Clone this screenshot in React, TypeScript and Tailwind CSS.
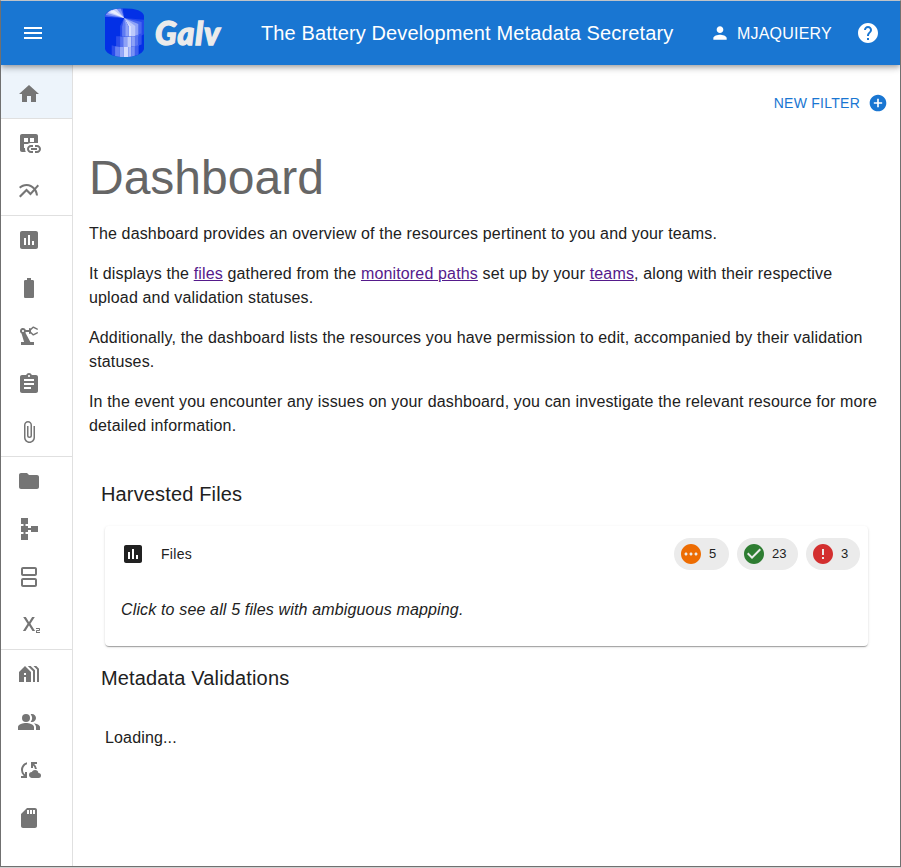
import type { ReactNode } from "react";
import type { IconType } from "react-icons";
import {
  MdAddCircle,
  MdAssessment,
  MdAssignment,
  MdAttachFile,
  MdBatteryFull,
  MdCheckCircle,
  MdCloudSync,
  MdDatasetLinked,
  MdError,
  MdFolder,
  MdHelp,
  MdHolidayVillage,
  MdHome,
  MdMenu,
  MdMultilineChart,
  MdOutlineSplitscreen,
  MdPending,
  MdPeopleAlt,
  MdPerson,
  MdPrecisionManufacturing,
  MdSchema,
  MdSdCard,
  MdSubscript,
} from "react-icons/md";

const groups: IconType[][] = [
  [MdDatasetLinked, MdMultilineChart],
  [MdAssessment, MdBatteryFull, MdPrecisionManufacturing, MdAssignment, MdAttachFile],
  [MdFolder, MdSchema, MdOutlineSplitscreen, MdSubscript],
  [MdHolidayVillage, MdPeopleAlt, MdCloudSync, MdSdCard],
];

function Logo() {
  return (
    <svg viewBox="30 26 116 146" className="mb-[2px] h-[49px] w-[39px]" preserveAspectRatio="none">
      <defs>
        <clipPath id="drum">
          <path d="M30 50C32 36 55 27 88 27s56 9 58 23v98c-4 15-28 24-58 24s-54-9-58-24z" />
        </clipPath>
      </defs>
      <g clipPath="url(#drum)">
        <path fill="#0330e6" d="M30 26h116v146H30z" />
        <path fill="#3d5df0" d="M87 56L30 52V44l14-12 20-6h18z" />
        <path fill="#7d93f5" d="M87 56L32 47l10-13 14-4 20-4z" />
        <path fill="#c3cdfb" d="M87 56L38 41l10-9 16-4z" />
        <path fill="#e9edff" d="M87 56L44 38l12-6z" />
        <path fill="#2347eb" d="M87 56l59 5v43l-10 6-49-4z" />
        <path fill="#2a4cec" d="M87 56L75 80v30h12z" />
        <path fill="#4868ef" d="M87 56l52 12v38l-10 5z" />
        <path fill="#5f7bf2" d="M87 56l-6 26v29h12V80z" />
        <path fill="#8fa3f7" d="M87 56l42 18v34l-18 4V80z" />
        <path fill="#bdc9fb" d="M87 56l33 24v30h-12V82z" />
        <path fill="#d8e0ff" d="M87 56l22 26v29h-8V82z" />
        <path fill="#8fa3f7" d="M87 56l14 26v29H91V76z" />
        <path fill="#2b4deb" d="M63 110h14v32H63z" />
        <path fill="#5470f0" d="M75 111h12v31H75z" />
        <path fill="#8da1f6" d="M85 112h11v30H85z" />
        <path fill="#c0ccfb" d="M96 112h12v30H96z" />
        <path fill="#8ea2f6" d="M108 111h12v30h-12z" />
        <path fill="#5b77f1" d="M119 109l11-4v34l-11 3z" />
        <path fill="#3153ec" d="M130 105l9-4v34l-9 3z" />
        <path fill="#2b4deb" d="M50 137l10 3v32H50z" />
        <path fill="#6580f2" d="M60 140l14 2v30H60z" />
        <path fill="#95a8f7" d="M74 142h12v30H74z" />
        <path fill="#d4dcff" d="M86 142h13v30H86z" />
        <path fill="#aab9f9" d="M99 142h10v30H99z" />
        <path fill="#7890f4" d="M109 141l10-1v32h-10z" />
        <path fill="#3f60ee" d="M119 140l11-4v36h-11z" />
      </g>
    </svg>
  );
}

function NavItem({ icon: Icon }: { icon: IconType }) {
  return (
    <li className="flex h-12 items-center pl-4">
      <Icon className="size-6" />
    </li>
  );
}

interface ChipProps {
  icon: IconType;
  color: string;
  width: string;
  children: ReactNode;
}

function Chip({ icon: Icon, color, width, children }: ChipProps) {
  return (
    <span className={`flex h-8 items-center gap-[6px] rounded-full bg-[#ebebeb] pl-[5px] text-[13px] ${width}`}>
      <Icon className={`size-6 ${color}`} />
      {children}
    </span>
  );
}

function DocLink({ children }: { children: ReactNode }) {
  return (
    <a href="#" className="text-[#551a8b] underline">
      {children}
    </a>
  );
}

export default function App() {
  return (
    <div className="h-[868px] w-[901px] bg-[#d0d0d0] pb-px font-['Liberation_Sans',Arial,sans-serif] text-[#212121]">
      <div className="flex h-full flex-col overflow-hidden border border-[#707070] border-t-[#bfc3c8] bg-white">
        <header className="z-10 flex h-16 shrink-0 items-center bg-[#1976d2] pl-5 text-white shadow-[0_2px_4px_-1px_rgba(0,0,0,0.2),0_4px_5px_0_rgba(0,0,0,0.14),0_1px_10px_0_rgba(0,0,0,0.12)]">
          <MdMenu className="size-6" />
          <div className="ml-[60px] flex items-center">
            <Logo />
            <span className="ml-[11px] w-[69px] font-['Lato',sans-serif] text-[32px] leading-none font-black tracking-[1px] text-[#ebebeb] italic [-webkit-text-stroke:1.3px_#ebebeb]">
              Galv
            </span>
          </div>
          <h1 className="ml-[37px] w-[449px] text-[20px] leading-8 tracking-[0.13px] whitespace-nowrap">
            The Battery Development Metadata Secretary
          </h1>
          <div className="flex items-center gap-[7px] text-base">
            <MdPerson className="size-5" />
            <span className="mt-px w-[96px] tracking-[0.2px]">MJAQUIERY</span>
          </div>
          <MdHelp className="ml-[23px] size-6" />
        </header>

        <div className="flex min-h-0 flex-1">
          <nav className="w-[72px] shrink-0 border-r border-[#e0e0e0] text-[#757575]">
            <div className="flex h-[53px] items-center bg-[#edf4fb] pt-[5px] pl-4">
              <MdHome className="size-6" />
            </div>
            {groups.map((icons, i) => (
              <ul key={i} className="border-t border-[#e0e0e0]">
                {icons.map((icon, j) => (
                  <NavItem key={j} icon={icon} />
                ))}
              </ul>
            ))}
          </nav>

          <main className="min-w-0 flex-1 px-4">
            <div className="mt-[26px] -mr-1 flex h-6 items-center justify-end gap-2 text-[14px] tracking-[0.25px] text-[#1976d2]">
              NEW FILTER
              <MdAddCircle className="size-5" />
            </div>

            <h2 className="mt-[35px] text-[48px] leading-14 text-[#666666]">Dashboard</h2>
            <div className="mt-4 space-y-4 text-base leading-6 tracking-[0.15px]">
              <p>The dashboard provides an overview of the resources pertinent to you and your teams.</p>
              <p>
                It displays the <DocLink>files</DocLink> gathered from the <DocLink>monitored paths</DocLink> set up by
                your <DocLink>teams</DocLink>, along with their respective
                <br />
                upload and validation statuses.
              </p>
              <p>
                Additionally, the dashboard lists the resources you have permission to edit, accompanied by their
                validation statuses.
              </p>
              <p>
                In the event you encounter any issues on your dashboard, you can investigate the relevant resource for
                more detailed information.
              </p>
            </div>

            <h3 className="mt-10 ml-3 text-[20px] leading-8 tracking-[0.15px]">Harvested Files</h3>
            <section className="mt-4 mr-4 ml-4 h-[120px] rounded-[4px] bg-white shadow-[0_2px_1px_-1px_rgba(0,0,0,0.2),0_1px_1px_0_rgba(0,0,0,0.14),0_1px_3px_0_rgba(0,0,0,0.12)]">
              <div className="flex items-center pt-3 pr-2 pl-4">
                <MdAssessment className="size-6" />
                <span className="ml-4 text-[14px] tracking-[0.3px]">Files</span>
                <div className="ml-auto flex gap-2">
                  <Chip icon={MdPending} color="text-[#ed6c02]" width="w-[55px]">5</Chip>
                  <Chip icon={MdCheckCircle} color="text-[#2e7d32]" width="w-[61px]">23</Chip>
                  <Chip icon={MdError} color="text-[#d32f2f]" width="w-[54px]">3</Chip>
                </div>
              </div>
              <p className="mt-7 ml-4 text-base leading-6 tracking-[0.15px] italic">
                Click to see all 5 files with ambiguous mapping.
              </p>
            </section>

            <h3 className="mt-4 ml-3 text-[20px] leading-8 tracking-[0.15px]">Metadata Validations</h3>
            <p className="mt-8 ml-4 text-base leading-6 tracking-[0.15px]">Loading...</p>
          </main>
        </div>
      </div>
    </div>
  );
}
